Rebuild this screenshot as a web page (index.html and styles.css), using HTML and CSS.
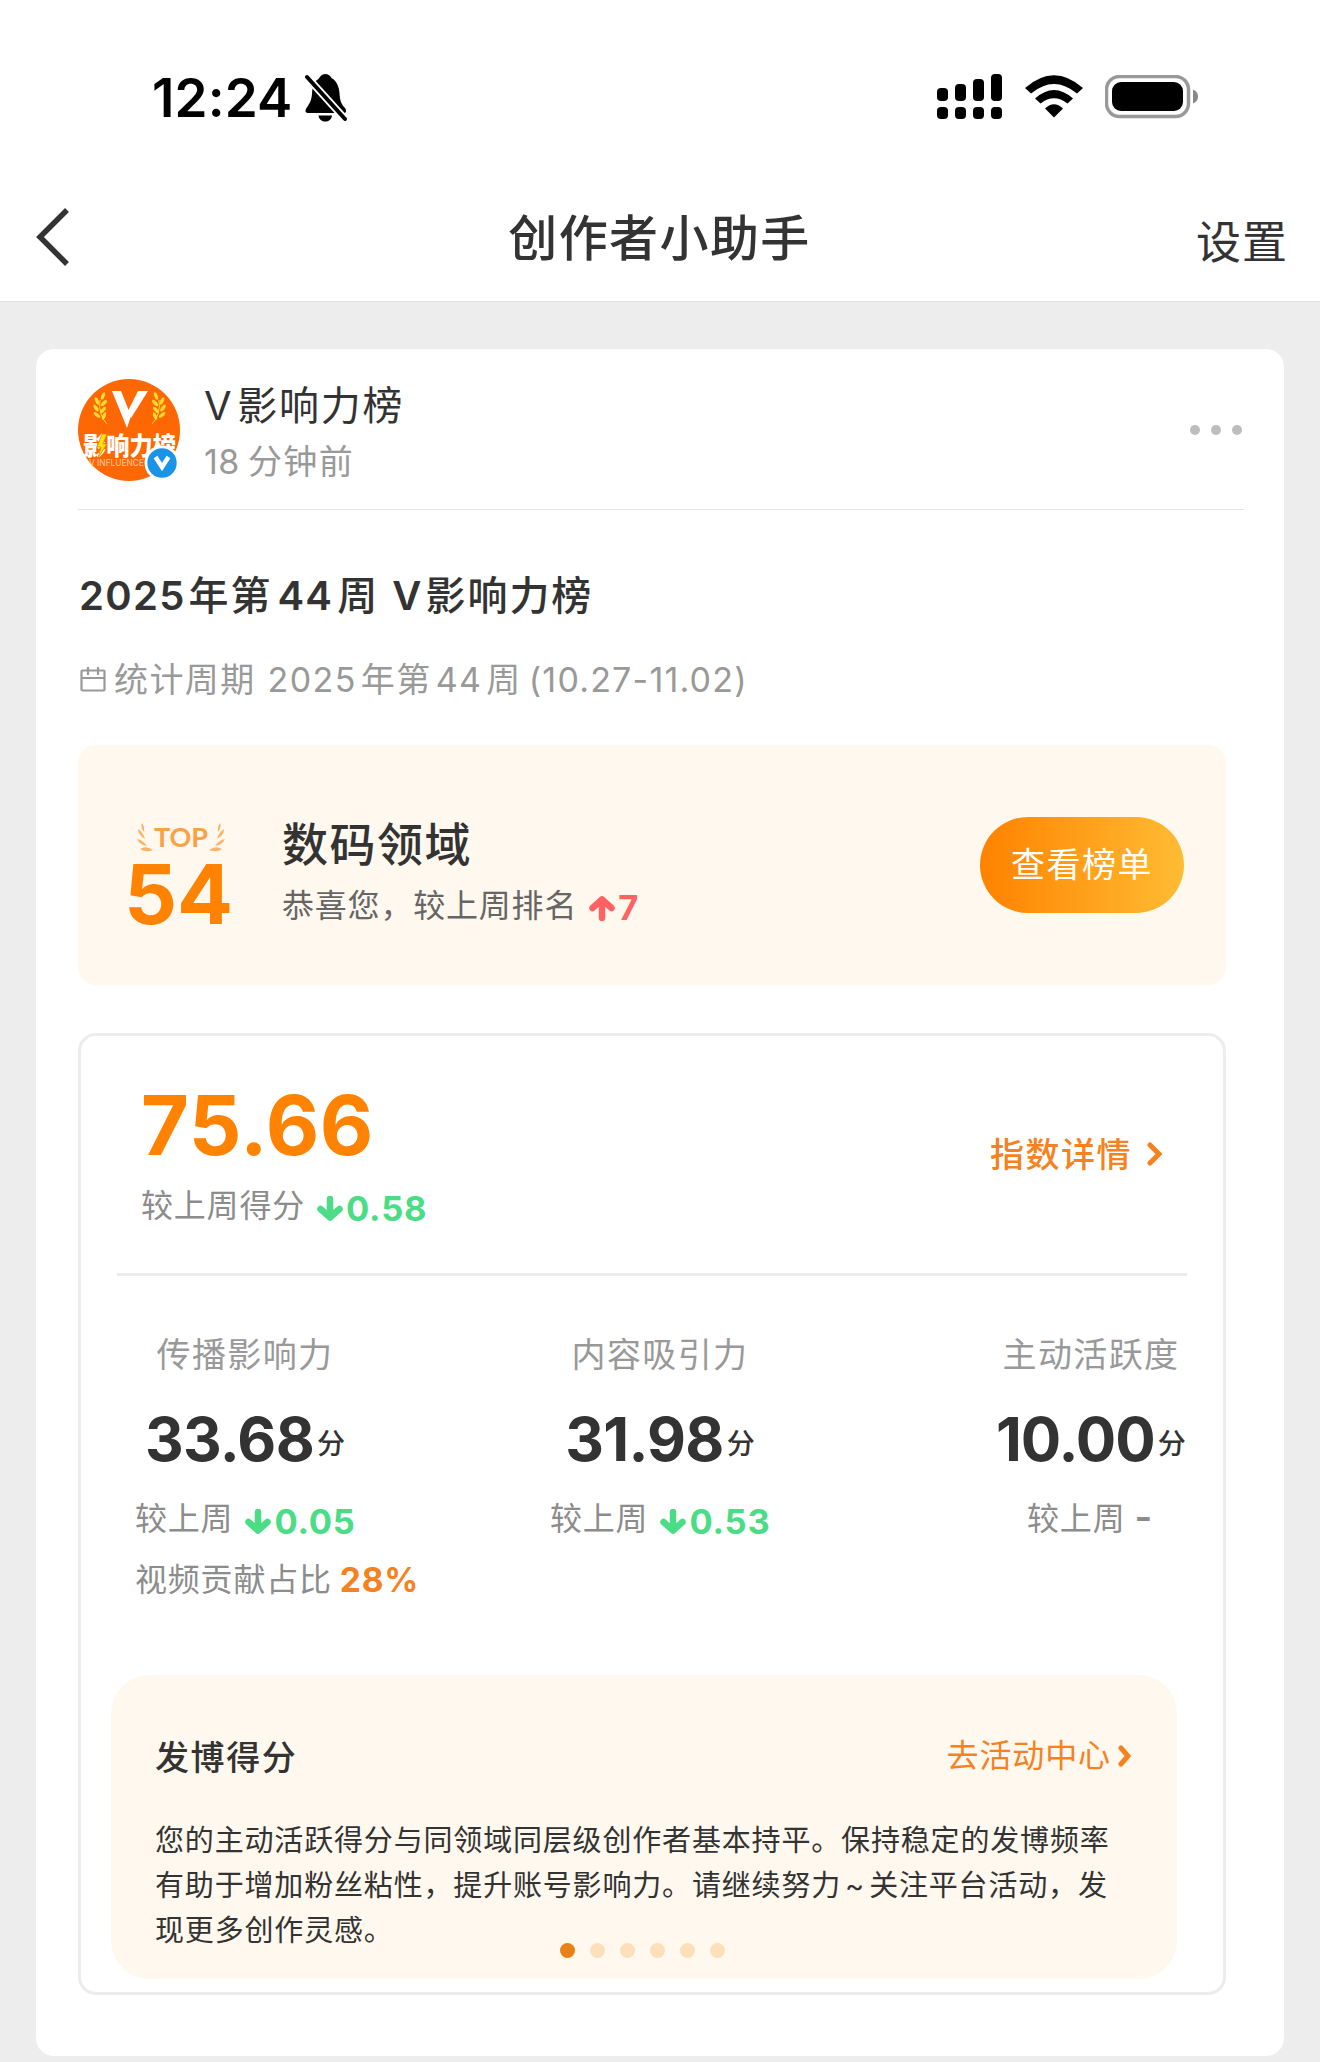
FILE: index.html
```html
<!DOCTYPE html>
<html lang="zh-CN">
<head>
    <meta charset="UTF-8">
    <meta name="viewport" content="width=device-width, initial-scale=1.0">
    <title>创作者小助手</title>
    <link rel="stylesheet" href="styles.css">
</head>
<body>
    <!-- Status bar -->
    <div class="status-bar">
        <span class="time">12:24</span>
        <svg class="bell" width="42" height="48" viewBox="0 0 42 48">
            <path d="M20 0c3 0 5 1.500 6.500 4C32 7 34 13 34.500 19c.4 7 1.500 11 5.500 15 2 3 1 5-1 5H3c-3 0-3-3-1.500-5C5 29 6.500 26 7 20 7.500 13 8 8 13.500 5 15 2.500 17 0 20 0z" fill="#000"/>
            <path d="M13.500 41.500h13.500c-.5 4-3.500 6-6.700 6s-6.300-2-6.800-6z" fill="#000"/>
            <path d="M3 0h9L8 14H3z" fill="#fff"/>
            <path d="M2 3l38 42" stroke="#fff" stroke-width="7.500"/>
            <path d="M2 3l38 42" stroke="#000" stroke-width="4" stroke-linecap="round"/>
        </svg>
        <div class="status-icons">
            <svg width="66" height="46" viewBox="0 0 66 46">
                <rect x="0" y="14" width="11" height="13" rx="4"/>
                <rect x="18" y="10" width="11" height="17" rx="4"/>
                <rect x="36" y="5" width="11" height="22" rx="4"/>
                <rect x="54" y="0" width="11" height="27" rx="4"/>
                <rect x="0" y="33" width="11" height="12" rx="4"/>
                <rect x="18" y="33" width="11" height="12" rx="4"/>
                <rect x="36" y="33" width="11" height="12" rx="4"/>
                <rect x="54" y="33" width="11" height="12" rx="4"/>
            </svg>
            <svg class="wifi" width="58" height="43" viewBox="0 0 58 43">
                <path d="M0 13Q29-12.500 58 13L52 18.500Q29-.5 6 18.500z"/>
                <path d="M10 23.500Q29 6.500 48 23.500L42.500 28.500Q29 18 15.500 28.500z"/>
                <path d="M20 33.500Q29 25 38 33.500L29 42.500z"/>
            </svg>
            <svg width="94" height="44" viewBox="0 0 94 44">
                <rect x="1.500" y="1.500" width="82" height="40" rx="13" fill="none" stroke="#999" stroke-width="3.500"/>
                <rect x="7" y="7" width="71" height="29" rx="9"/>
                <path d="M88 14.500q5 2 5 7t-5 7z" fill="#888"/>
            </svg>
        </div>
    </div>

    <div class="nav">
        <svg class="back" width="34" height="58" viewBox="0 0 34 58">
            <path d="M31 2L4 29l27 27" fill="none" stroke="#333" stroke-width="5.500"/>
        </svg>
        <div class="nav-title">创作者小助手</div>
        <div class="nav-action">设置</div>
    </div>

    <div class="card">
        <div class="author">
            <div class="avatar">
                <svg width="102" height="102" viewBox="0 0 102 102">
                    <defs>
                        <g id="wheat" fill="#ffdc2e">
                            <ellipse cx="25" cy="17" rx="1.700" ry="4" transform="rotate(20 25 17)"/>
                            <ellipse cx="19" cy="22" rx="1.700" ry="4" transform="rotate(-25 19 22)"/>
                            <ellipse cx="26" cy="24" rx="1.700" ry="4" transform="rotate(45 26 24)"/>
                            <ellipse cx="18" cy="29" rx="1.700" ry="4" transform="rotate(-35 18 29)"/>
                            <ellipse cx="25" cy="31" rx="1.700" ry="4" transform="rotate(40 25 31)"/>
                            <ellipse cx="19" cy="36" rx="1.700" ry="4" transform="rotate(-50 19 36)"/>
                            <ellipse cx="26" cy="37" rx="1.700" ry="4" transform="rotate(20 26 37)"/>
                            <path d="M22 21q-2 15 7 24" fill="none" stroke="#ffdc2e"/>
                        </g>
                    </defs>
                    <circle cx="51" cy="51" r="51" fill="#fd6804"/>
                    <use href="#wheat"/>
                    <use href="#wheat" transform="translate(103 0) scale(-1 1)"/>
                    <path d="M34 12h9l10 25-4 12z" fill="#fff"/>
                    <path d="M60 12h10L53 39l-3-7z" fill="#fff"/>
                    <text class="avatar-name" x="5" y="76" textLength="93" lengthAdjust="spacingAndGlyphs">影响力榜</text>
                    <path d="M24 55l-5 13h4l-3 11 9-14h-4l4-10z" fill="#ffe600" stroke="#fd6804" stroke-width=".7"/>
                    <text class="avatar-en" x="11" y="87" textLength="55" lengthAdjust="spacingAndGlyphs">V INFLUENCE</text>
                </svg>
                <svg class="badge" width="36" height="36" viewBox="0 0 36 36">
                    <circle cx="18" cy="18" r="17.500" fill="#fff"/>
                    <circle cx="18" cy="18" r="14.700" fill="#1a94e6"/>
                    <path d="M11.500 12l6.500 10 6.500-10" fill="none" stroke="#fff" stroke-width="4.500"/>
                </svg>
            </div>
            <div class="author-info">
                <div class="author-name"><span class="latin">V</span>影响力榜</div>
                <div class="author-time"><span class="latin">18</span>分钟前</div>
            </div>
            <div class="more"><i></i><i></i><i></i></div>
        </div>

        <div class="content">
            <h1 class="report-title"><span class="num">2025</span>年第<span class="num both">44</span>周<span class="num v">V</span>影响力榜</h1>
            <div class="period">
                <svg width="26" height="26" viewBox="0 0 26 26" fill="none" stroke="#999" stroke-width="2.200">
                    <rect x="1.500" y="3.500" width="23" height="20" rx="1"/>
                    <path d="M1.500 11h23M8 0v8M18 0v8"/>
                </svg>
                <span class="period-text">统计周期<span class="num lead">2025</span>年第<span class="num both">44</span>周<span class="num range">(10.27-11.02)</span></span>
            </div>

            <div class="rank">
                <div class="rank-number">
                    <div class="top">
                        <svg width="17" height="30" viewBox="0 0 17 30" fill="#fbb368">
                            <path d="M5 1q-2 4 2 9 1-5-2-9zM1 7q0 6 7 10Q6 10 1 7zM0 17q3 6 10 7Q6 18 0 17zM3 27q6-4 13 1-7 3-13-1z"/>
                        </svg>
                        <span>TOP</span>
                        <svg class="flip" width="17" height="30" viewBox="0 0 17 30" fill="#fbb368">
                            <path d="M5 1q-2 4 2 9 1-5-2-9zM1 7q0 6 7 10Q6 10 1 7zM0 17q3 6 10 7Q6 18 0 17zM3 27q6-4 13 1-7 3-13-1z"/>
                        </svg>
                    </div>
                    <div class="place">54</div>
                </div>
                <div class="rank-info">
                    <div class="field">数码领域</div>
                    <div class="rank-change">恭喜您，较上周排名
                        <span class="change up">
                            <svg width="26" height="26" viewBox="0 0 26 26"><path d="M13 23V5M3.500 13L13 4.500l9.500 8.500" fill="none" stroke="currentColor" stroke-width="6.500" stroke-linecap="round" stroke-linejoin="round"/></svg>7
                        </span>
                    </div>
                </div>
                <button class="rank-btn">查看榜单</button>
            </div>

            <div class="panel">
                <div class="score">
                    <div>
                        <div class="score-value">75.66</div>
                        <div class="compare">较上周得分
                            <span class="change down">
                                <svg width="26" height="26" viewBox="0 0 26 26"><path d="M13 3v18M3.500 13l9.500 8.500 9.500-8.500" fill="none" stroke="currentColor" stroke-width="6.500" stroke-linecap="round" stroke-linejoin="round"/></svg>0.58
                            </span>
                        </div>
                    </div>
                    <div class="detail-link">指数详情
                        <svg width="15" height="24" viewBox="0 0 15 24"><path d="M3 3l9 9-9 9" fill="none" stroke="currentColor" stroke-width="5" stroke-linecap="round"/></svg>
                    </div>
                </div>

                <div class="stats">
                    <div class="stat">
                        <div class="stat-label">传播影响力</div>
                        <div class="stat-value">33.68<small>分</small></div>
                        <div class="compare">较上周
                            <span class="change down">
                                <svg width="26" height="26" viewBox="0 0 26 26"><path d="M13 3v18M3.500 13l9.500 8.500 9.500-8.500" fill="none" stroke="currentColor" stroke-width="6.500" stroke-linecap="round" stroke-linejoin="round"/></svg>0.05
                            </span>
                        </div>
                        <div class="compare video">视频贡献占比<b>28%</b></div>
                    </div>
                    <div class="stat">
                        <div class="stat-label">内容吸引力</div>
                        <div class="stat-value">31.98<small>分</small></div>
                        <div class="compare">较上周
                            <span class="change down">
                                <svg width="26" height="26" viewBox="0 0 26 26"><path d="M13 3v18M3.500 13l9.500 8.500 9.500-8.500" fill="none" stroke="currentColor" stroke-width="6.500" stroke-linecap="round" stroke-linejoin="round"/></svg>0.53
                            </span>
                        </div>
                    </div>
                    <div class="stat last">
                        <div class="stat-label">主动活跃度</div>
                        <div class="stat-value">10.00<small>分</small></div>
                        <div class="compare">较上周<span class="same">-</span></div>
                    </div>
                </div>

                <div class="tips">
                    <div class="tips-head">
                        <h2>发博得分</h2>
                        <div class="tips-link">去活动中心
                            <svg width="13" height="22" viewBox="0 0 13 22"><path d="M3 3l7 8-7 8" fill="none" stroke="currentColor" stroke-width="5" stroke-linecap="round"/></svg>
                        </div>
                    </div>
                    <p>您的主动活跃得分与同领域同层级创作者基本持平。保持稳定的发博频率<br>有助于增加粉丝粘性，提升账号影响力。请继续努力<span class="tilde">~</span>关注平台活动，发<br>现更多创作灵感。</p>
                    <div class="pager"><i class="active"></i><i></i><i></i><i></i><i></i><i></i></div>
                </div>
            </div>
        </div>
    </div>
</body>
</html>
```
FILE: styles.css
```css
* {
    box-sizing: border-box;
}
body {
    margin: 0;
    background: #ededed;
    color: #333;
    font-family: Inter, "Noto Sans CJK SC", sans-serif;
    white-space: nowrap;
}
svg {
    display: block;
    flex: none;
}
h1, h2, p {
    margin: 0;
}

/* status bar */
.status-bar {
    display: flex;
    align-items: center;
    height: 195px;
    padding: 0 121px 0 152px;
    background: #fff;
    color: #000;
}
.time {
    font-size: 53px;
    font-weight: 600;
    line-height: 60px;
    width: 153px;
    letter-spacing: 0.1px;
}
.status-icons {
    display: flex;
    align-items: center;
    margin-left: auto;
    padding-bottom: 2px;
}
.wifi {
    margin: 0 22px;
}

/* navigation */
.nav {
    display: grid;
    grid-template-columns: 1fr auto 1fr;
    align-items: center;
    height: 107px;
    padding: 0 32px 28px 36px;
    background: #fff;
    border-bottom: 1px solid #e2e2e2;
}
.nav-title {
    margin: 4px 5px 0 0;
    font-size: 49px;
    font-weight: 500;
    letter-spacing: 1.4px;
    line-height: 80px;
}
.nav-action {
    justify-self: end;
    padding-top: 12px;
    font-size: 45px;
    letter-spacing: 1px;
    line-height: 72px;
}

/* card */
.card {
    margin: 47px 36px 0;
    height: 1707px;
    border-radius: 18px;
    background: #fff;
}
.author {
    display: flex;
    align-items: center;
    height: 161px;
    margin: 0 40px 0 42px;
    padding-top: 2px;
    border-bottom: 1px solid #e4e4e4;
}
.avatar {
    position: relative;
    width: 102px;
    height: 102px;
}
.avatar-name {
    fill: #fff;
    font-size: 25px;
    font-weight: 900;
}
.avatar-en {
    fill: #ffc9a0;
    font-size: 9px;
}
.badge {
    position: absolute;
    left: 66px;
    top: 66px;
}
.author-info {
    margin-left: 24px;
    padding-top: 7px;
}
.author-name {
    font-size: 40px;
    letter-spacing: 1.7px;
    line-height: 56px;
}
.author-name .latin {
    margin-right: 4px;
}
.author-time {
    color: #999;
    font-size: 34px;
    letter-spacing: 1.4px;
    line-height: 56px;
}
.author-time .latin {
    margin-right: 8px;
    letter-spacing: 0.5px;
}
.more {
    display: flex;
    gap: 11px;
    margin: 0 2px 0 auto;
}
.more i {
    width: 10px;
    height: 10px;
    border-radius: 50%;
    background: #bdbdbd;
}
.content {
    padding: 56px 58px 0 42px;
}
.report-title {
    padding-left: 1px;
    font-size: 40px;
    font-weight: 500;
    letter-spacing: 1.9px;
    line-height: 60px;
}
.report-title .num {
    font-weight: 600;
    letter-spacing: 1.3px;
    margin-right: 3px;
}
.report-title .both {
    margin-left: 5px;
    margin-right: 4px;
}
.report-title .v {
    margin-left: 13px;
    margin-right: 3px;
}
.period {
    display: flex;
    align-items: center;
    margin: 29px 0 40px;
    padding-left: 2px;
    color: #999;
    font-size: 34px;
    letter-spacing: 1.4px;
    line-height: 50px;
}
.period-text {
    margin-left: 8px;
}
.period .num {
    margin-right: 4px;
}
.period .lead {
    margin-left: 12px;
}
.period .both {
    margin-left: 4px;
}
.period .range {
    margin-left: 7px;
    letter-spacing: 1.2px;
}

/* ranking */
.rank {
    display: flex;
    align-items: center;
    height: 240px;
    padding: 0 42px 0 51px;
    border-radius: 18px;
    background: #fff8ee;
}
.rank-number {
    width: 100px;
    margin-top: 18px;
}
.top {
    display: flex;
    align-items: center;
    justify-content: center;
    height: 40px;
    margin-left: 4px;
    color: #f9a048;
}
.top span {
    font-family: Lato, sans-serif;
    font-weight: 700;
    font-size: 27px;
    line-height: 32px;
}
.flip {
    transform: scaleX(-1);
}
.place {
    margin-left: -5px;
    color: #ff8200;
    font-size: 83px;
    font-weight: 700;
    line-height: 74px;
}
.rank-info {
    margin: 20px 0 0 53px;
}
.field {
    font-size: 46px;
    font-weight: 500;
    letter-spacing: 1.5px;
    line-height: 62px;
}
.rank-change {
    display: flex;
    align-items: center;
    color: #666;
    font-size: 32px;
    letter-spacing: 0.8px;
    line-height: 50px;
    padding: 6px 0 7px;
}
.change {
    display: flex;
    align-items: center;
    gap: 3px;
    height: 50px;
    margin-left: 12px;
    padding-top: 5px;
    font-size: 34.500px;
    font-weight: 700;
}
.up {
    color: #ff6262;
}
.down {
    color: #4bdc86;
}
.rank-btn {
    width: 204px;
    height: 96px;
    margin-left: auto;
    padding: 0 0 6px;
    border: none;
    border-radius: 48px;
    background: linear-gradient(90deg, #ff8200, #ffbc33);
    color: #fff;
    font-family: inherit;
    font-size: 34px;
    letter-spacing: 1.5px;
}

/* score panel */
.panel {
    height: 962px;
    margin-top: 48px;
    border: 3px solid #ececec;
    border-radius: 18px;
}
.score {
    display: flex;
    justify-content: space-between;
    height: 240px;
    margin: 0 36px;
    padding: 44px 25px 0 24px;
    border-bottom: 3px solid #ececec;
}
.score-value {
    color: #ff8200;
    font-size: 82.500px;
    font-weight: 700;
    letter-spacing: 0.5px;
    line-height: 90px;
}
.score .compare {
    margin-top: 11px;
}
.compare {
    display: flex;
    align-items: center;
    color: #8c8c8c;
    font-size: 32px;
    letter-spacing: 0.8px;
    line-height: 50px;
}
.detail-link {
    display: flex;
    align-items: center;
    height: 145px;
    color: #f5821f;
    font-size: 34px;
    font-weight: 500;
    letter-spacing: 1.5px;
}
.detail-link svg {
    margin: 3px 0 0 15px;
}
.stats {
    display: grid;
    grid-template-columns: 415px 446px auto;
    justify-content: start;
    height: 399px;
    padding: 54px 0 0 54px;
}
.stat {
    width: 218px;
}
.stat.last {
    width: 188px;
}
.stat-label {
    padding-left: 2px;
    color: #999;
    font-size: 34px;
    letter-spacing: 1.4px;
    line-height: 50px;
    text-align: center;
}
.stat-value {
    margin-top: 24px;
    padding-left: 2px;
    font-size: 60px;
    font-weight: 700;
    letter-spacing: -0.7px;
    line-height: 70px;
    text-align: center;
}
.stat.last .stat-value {
    padding-left: 0;
    letter-spacing: -1px;
}
.stat-value small {
    margin-left: 3px;
    font-size: 28px;
    font-weight: 500;
    letter-spacing: 0;
    vertical-align: 7px;
    line-height: 1;
}
.stat .compare {
    margin-top: 20px;
}
.stat.last .compare {
    justify-content: center;
}
.stat .video {
    margin-top: 11px;
}
.video b {
    margin-left: 8px;
    color: #f5821f;
    font-size: 33.500px;
}
.same {
    margin: -4px 0 0 9px;
    font-size: 38px;
    font-weight: 600;
}

/* tips carousel */
.tips {
    position: relative;
    height: 304px;
    margin: 0 46px 0 30px;
    padding: 56px 46px 0 44px;
    border-radius: 38px;
    background: #fff8ee;
}
.tips-head {
    display: flex;
    align-items: center;
    justify-content: space-between;
    line-height: 50px;
}
.tips h2 {
    font-size: 34px;
    font-weight: 500;
    letter-spacing: 1.6px;
}
.tips-link {
    display: flex;
    align-items: center;
    padding-bottom: 3px;
    color: #f5821f;
    font-size: 32px;
    letter-spacing: 0.9px;
}
.tips-link svg {
    margin-left: 7px;
}
.tips p {
    margin-top: 34px;
    font-size: 29px;
    letter-spacing: 0.83px;
    line-height: 45px;
}
.tilde {
    margin: 0 4px;
}
.pager {
    position: absolute;
    left: 449px;
    top: 268px;
    display: flex;
    gap: 15px;
}
.pager i {
    width: 15px;
    height: 15px;
    border-radius: 50%;
    background: #fddfba;
}
.pager .active {
    background: #e88116;
}
```
